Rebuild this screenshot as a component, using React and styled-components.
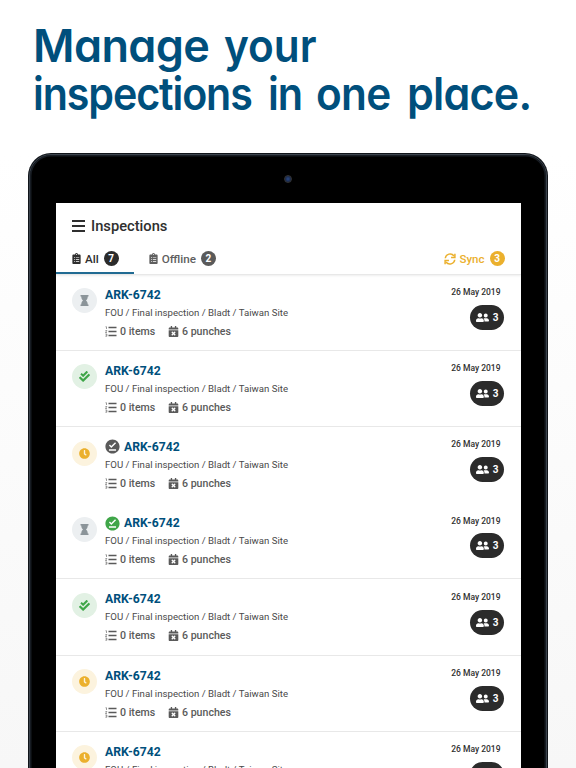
import React from 'react';
import styled, { createGlobalStyle } from 'styled-components';
import {
    FaClipboardList,
    FaCalendarTimes,
    FaCheckDouble,
    FaClock,
    FaUserFriends,
} from 'react-icons/fa';
import { MdOfflinePin } from 'react-icons/md';

const inspections = [
    { status: 'waiting' },
    { status: 'done' },
    { status: 'pending', offline: 'saved', joined: true },
    { status: 'waiting', offline: 'synced' },
    { status: 'done' },
    { status: 'pending' },
    { status: 'pending' },
];

const statuses = {
    waiting: { icon: Hourglass, size: 11, color: '#8b9499', background: '#eceff1' },
    done: { icon: FaCheckDouble, size: 11, color: '#3fa648', background: '#e2f1e4' },
    pending: { icon: FaClock, size: 11, color: '#ebb02d', background: '#fcf3de' },
};

export default function App() {
    return (
        <Page>
            <GlobalStyle/>
            <Headline>
                <Line>
                    <Word $width={191} $spacing={-0.6}>Manage</Word>
                    <Word $width={100} $spacing={0} $stretch={.94}>your</Word>
                </Line>
                <Line>
                    <Word $width={235} $spacing={-1.2} $stretch={.915}>inspections</Word>
                    <Word $width={48} $spacing={-1.2} $stretch={.92}>in</Word>
                    <Word $width={91} $spacing={-0.8} $stretch={.94}>one</Word>
                    <Word $width={130} $spacing={-0.8} $stretch={.955}>place.</Word>
                </Line>
            </Headline>
            <Tablet>
                <Bezel>
                    <CameraBar><Camera/></CameraBar>
                    <Screen>
                        <Header/>
                        {inspections.map((item, i) => <Inspection key={i} {...item}/>)}
                    </Screen>
                </Bezel>
            </Tablet>
        </Page>
    );
}

function Header() {
    return (
        <Top>
            <Title>
                <Burger><i/><i/><i/></Burger>
                Inspections
            </Title>
            <Tabs>
                <Tab $active>
                    <FaClipboardList size={11}/>
                    All
                    <Count $color="#2b2b2b">7</Count>
                </Tab>
                <Tab>
                    <FaClipboardList size={11}/>
                    Offline
                    <Count $color="#5a5a5a">2</Count>
                </Tab>
                <Sync>
                    <SyncIcon/>
                    Sync
                    <Count $color="#ebb02d">3</Count>
                </Sync>
            </Tabs>
        </Top>
    );
}

function SyncIcon() {
    return (
        <svg width="12" height="12" viewBox="0 0 24 24" fill="none" stroke="currentColor" strokeWidth="3">
            <path d="M2.5 10.5a9.7 9.7 0 0 1 17.5-4.5"/>
            <path d="M21.8 1.5v7.7h-7.7"/>
            <path d="M21.5 13.5a9.7 9.7 0 0 1-17.5 4.5"/>
            <path d="M2.2 22.5v-7.7h7.7"/>
        </svg>
    );
}

function Hourglass({ size }) {
    return (
        <svg width={size} height={size} viewBox="0 0 22 22" fill="currentColor">
            <path d="M3 0h16v3h-1.5c0 4-1.5 6.5-3.5 8 2 1.5 3.5 4 3.5 8H19v3H3v-3h1.5c0-4 1.5-6.5 3.5-8-2-1.5-3.5-4-3.5-8H3z"/>
        </svg>
    );
}

function ListIcon() {
    return (
        <svg width="12" height="11" viewBox="0 0 24 22" stroke="currentColor" fill="none">
            <path d="M7 3h16M7 11h16M7 19h16" strokeWidth="2.6"/>
            <path d="M1 1.5h2v4.5M.8 9h3l-3 4h3.2M.8 16h3v4.5h-3M1.5 18.2h2" strokeWidth="1.2"/>
        </svg>
    );
}

function Inspection({ status, offline, joined }) {
    const { icon: Icon, size, color, background } = statuses[status];

    return (
        <Row $joined={joined}>
            <Status $color={color} $background={background}>
                <Icon size={size}/>
            </Status>
            <Details>
                <Name>
                    {offline && (
                        <OfflineMark $synced={offline === 'synced'}>
                            <MdOfflinePin size={17}/>
                        </OfflineMark>
                    )}
                    ARK-6742
                </Name>
                <Site>FOU / Final inspection / Bladt / Taiwan Site</Site>
                <Facts>
                    <Fact $width={63}><ListIcon/>0 items</Fact>
                    <Fact><FaCalendarTimes size={11}/>6 punches</Fact>
                </Facts>
            </Details>
            <Aside>
                <Day>26 May 2019</Day>
                <People><FaUserFriends size={13}/>3</People>
            </Aside>
        </Row>
    );
}

const GlobalStyle = createGlobalStyle`
    body {
        margin: 0;
    }

    * {
        box-sizing: border-box;
    }

    svg {
        flex: none;
        display: block;
    }
`;

const Page = styled.div`
    width: 576px;
    height: 768px;
    overflow: hidden;
    background: linear-gradient(#fff 20%, #f7f7f7);
    font-family: Roboto, sans-serif;
    color: #2f2f2f;
`;

const Headline = styled.h1`
    height: 152.7px;
    margin: 0;
    padding: 22px 0 0 33px;
    font: 600 45px/48px Inter, sans-serif;
    font-feature-settings: 'cv11';
    color: #004f7c;
`;

const Line = styled.div`
    display: flex;
`;

const Word = styled.span`
    flex: none;
    width: ${p => p.$width}px;
    letter-spacing: ${p => p.$spacing}px;
    white-space: nowrap;
    transform: scaleX(${p => p.$stretch || 1});
    transform-origin: left;
`;

const Tablet = styled.div`
    width: 520px;
    height: 700px;
    margin-left: 28px;
    padding: 1px;
    border-radius: 23px;
    background: #101419;
`;

const Bezel = styled.div`
    height: 100%;
    padding: 0 25px 0 26px;
    border: 1.5px solid #3c444d;
    border-radius: 22px;
    background: #000;
    box-shadow: inset 0 0 0 1.5px #171c23;
`;

const CameraBar = styled.div`
    display: flex;
    justify-content: center;
    height: 48.8px;
    padding: 20.5px 1px 0 0;
`;

const Camera = styled.div`
    width: 8px;
    height: 8px;
    border-radius: 50%;
    border: 1.5px solid #343434;
    background: radial-gradient(#2b4985, #10182b);
`;

const Screen = styled.div`
    width: 465px;
    background: #fff;
`;

const Top = styled.div`
    height: 71.2px;
    padding-top: 13.5px;
    border-bottom: 1px solid #e8e8e8;
    box-shadow: 0 1px 2px rgba(0, 0, 0, .07);
`;

const Title = styled.div`
    display: flex;
    align-items: center;
    gap: 6px;
    height: 18px;
    padding-left: 16px;
    font-size: 14.7px;
    font-weight: 500;
`;

const Burger = styled.div`
    display: flex;
    flex-direction: column;
    gap: 3px;
    width: 13px;

    i {
        height: 2px;
        background: #2f2f2f;
    }
`;

const Tabs = styled.div`
    display: flex;
    height: 39px;
    font-size: 11.7px;
    font-weight: 500;
`;

const Tab = styled.div`
    display: flex;
    align-items: center;
    gap: 4px;
    height: 39px;
    padding: ${p => p.$active ? '14px 15px 3px 16px' : '14px 0 3px 15px'};
    color: ${p => p.$active ? '#2f2f2f' : '#5f5f5f'};
    border-bottom: 2px solid ${p => p.$active ? '#216b93' : 'transparent'};

    svg {
        margin: 0 -1px;
    }
`;

const Count = styled.span`
    flex: none;
    width: 15px;
    height: 15px;
    margin-left: 1px;
    border-radius: 50%;
    background: ${p => p.$color};
    color: #fff;
    font-size: 10px;
    font-weight: 700;
    line-height: 15px;
    text-align: center;
`;

const Sync = styled(Tab)`
    gap: 5px;
    margin-left: auto;
    padding-right: 16.5px;
    color: #ebb02d;
    font-size: 11.5px;

    span {
        margin-left: 0;
    }
`;

const Row = styled.div`
    display: flex;
    height: 76.2px;
    padding: 12.4px 17px 0 16px;
    border-bottom: 1px solid ${p => p.$joined ? 'transparent' : '#e8e8e8'};
`;

const Status = styled.div`
    display: flex;
    align-items: center;
    justify-content: center;
    width: 25px;
    height: 25px;
    margin-top: 1.1px;
    border-radius: 50%;
    color: ${p => p.$color};
    background: ${p => p.$background};
`;

const Details = styled.div`
    flex: 1;
    margin-left: 8px;
`;

const Name = styled.div`
    display: flex;
    align-items: center;
    gap: 3px;
    height: 15px;
    font-size: 12.2px;
    font-weight: 700;
    color: #004f7c;
`;

const OfflineMark = styled.span`
    margin-left: -1px;
    color: ${p => p.$synced ? '#3fa648' : '#5a5a5a'};
`;

const Site = styled.div`
    margin-top: 4.6px;
    font-size: 9.63px;
    line-height: 12px;
    color: #4a4a4a;
    white-space: nowrap;
`;

const Facts = styled.div`
    display: flex;
    margin-top: 6px;
    font-size: 10.6px;
    font-weight: 500;
    line-height: 13px;
    color: #5a5a5a;
`;

const Fact = styled.div`
    display: flex;
    align-items: center;
    gap: 3px;
    width: ${p => p.$width ? `${p.$width}px` : 'auto'};
`;

const Aside = styled.div`
    display: flex;
    flex-direction: column;
    align-items: flex-end;
`;

const Day = styled.div`
    margin: -1px 3.5px 0 0;
    font-size: 8.5px;
    line-height: 12px;
    font-weight: 500;
`;

const People = styled.div`
    display: flex;
    align-items: center;
    justify-content: center;
    gap: 4px;
    width: 34px;
    height: 25px;
    margin-top: 6.8px;
    border-radius: 13px;
    background: #2b2b2b;
    color: #fff;
    font-size: 10px;
    font-weight: 700;
`;
